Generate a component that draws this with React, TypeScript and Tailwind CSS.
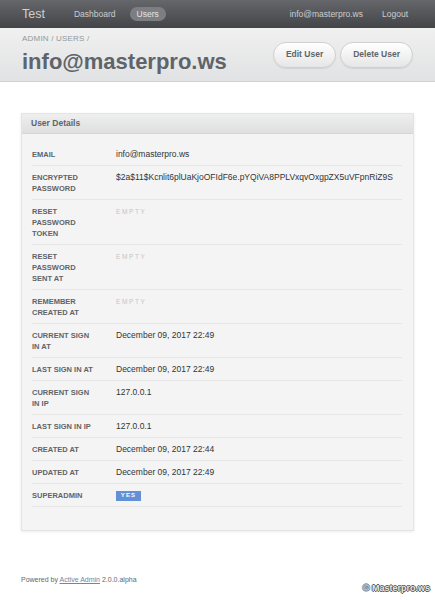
import React from 'react';

type Row = { label: string; value?: string; kind?: 'empty' | 'yes' };

const ROWS: Row[] = [
  { label: 'Email', value: 'info@masterpro.ws' },
  { label: 'Encrypted Password', value: '$2a$11$Kcnlit6plUaKjoOFIdF6e.pYQiVA8PPLVxqvOxgpZX5uVFpnRiZ9S' },
  { label: 'Reset Password Token', kind: 'empty' },
  { label: 'Reset Password Sent At', kind: 'empty' },
  { label: 'Remember Created At', kind: 'empty' },
  { label: 'Current Sign In At', value: 'December 09, 2017 22:49' },
  { label: 'Last Sign In At', value: 'December 09, 2017 22:49' },
  { label: 'Current Sign In Ip', value: '127.0.0.1' },
  { label: 'Last Sign In Ip', value: '127.0.0.1' },
  { label: 'Created At', value: 'December 09, 2017 22:44' },
  { label: 'Updated At', value: 'December 09, 2017 22:49' },
  { label: 'Superadmin', kind: 'yes' },
];

function ActionButton({ children }: { children: React.ReactNode }) {
  return (
    <button className="h-[26px] px-[12px] rounded-full border border-[#d0d0d0] bg-gradient-to-b from-[#ffffff] to-[#e6e6e6] text-[8.5px] font-bold text-[#5e6469] shadow-[0_1px_1px_rgba(0,0,0,0.08)]">
      {children}
    </button>
  );
}

export default function App() {
  return (
    <div className="relative min-h-[600px] bg-white font-['Liberation_Sans',Arial,sans-serif]">
      {/* Top nav */}
      <header className="h-[28px] flex items-center pl-[22px] pr-[27px] bg-gradient-to-b from-[#65676b] to-[#434549]">
        <span className="text-[12.5px] text-[#cfcfcf] leading-none">Test</span>
        <nav className="ml-[29px] flex items-center">
          <span className="text-[8.5px] text-[#cdcdcd]">Dashboard</span>
          <span className="ml-[14px] h-[14px] px-[7px] flex items-center rounded-full bg-[#7c7e82] text-[8.5px] text-[#e4e4e4]">Users</span>
        </nav>
        <div className="ml-auto flex items-center gap-[19px] text-[8.5px] text-[#cdcdcd]">
          <span>info@masterpro.ws</span>
          <span>Logout</span>
        </div>
      </header>

      {/* Title bar */}
      <div className="h-[54px] flex items-center justify-between pl-[22px] pr-[22px] bg-gradient-to-b from-[#f0f0f0] to-[#e1e2e3] border-b border-[#d2d2d2]">
        <div className="self-start pt-[6px] flex flex-col">
          <div className="text-[8px] leading-[10px] text-[#8f989f] tracking-[0.2px]">ADMIN / USERS /</div>
          <h1 className="mt-[6px] text-[22px] leading-[24px] font-bold text-[#5e6469]">info@masterpro.ws</h1>
        </div>
        <div className="flex items-center gap-[4px]">
          <ActionButton>Edit User</ActionButton>
          <ActionButton>Delete User</ActionButton>
        </div>
      </div>

      {/* Panel */}
      <div className="mx-[21px] mt-[31px] border border-[#e4e4e4] bg-[#f4f4f4] shadow-[0_1px_3px_rgba(0,0,0,0.08)]">
        <div className="h-[20px] flex items-center px-[9px] bg-gradient-to-b from-[#efefef] to-[#dedfe0] border-b border-[#d6d6d6] text-[8.5px] font-bold text-[#5e6469]">
          User Details
        </div>
        <div className="pt-[9px] pl-[10px] pr-[11px] pb-[23px]">
          {ROWS.map((r) => (
            <div key={r.label} className="flex border-b border-[#e6e6e6] pt-[6px] pb-[5px]">
              <div className="w-[84px] shrink-0 pr-[21px] text-[7.5px] leading-[11px] font-bold uppercase text-[#5e6469]">
                {r.label}
              </div>
              <div className="flex-1 text-[8.5px] leading-[11px] text-[#323537] whitespace-nowrap">
                {r.kind === 'empty' && (
                  <span className="text-[6.5px] tracking-[1.6px] text-[#c4c4c4]">EMPTY</span>
                )}
                {r.kind === 'yes' && (
                  <span className="inline-flex items-center justify-center w-[25px] h-[10px] bg-[#6490d8] text-[6px] font-bold tracking-[1.2px] text-white align-middle">
                    YES
                  </span>
                )}
                {!r.kind && r.value}
              </div>
            </div>
          ))}
        </div>
      </div>

      {/* Footer */}
      <div className="mx-[21px] mt-[44px] text-[7px] leading-[9px] text-[#666]">
        Powered by <span className="underline text-[#6f87a3]">Active Admin</span> 2.0.0.alpha
      </div>

      {/* Watermark overlay */}
      <div className="absolute right-[5px] bottom-[5px] text-[9px] font-bold text-[#e8e8e8] [text-shadow:1px_0_0_#555,-1px_0_0_#555,0_1px_0_#555,0_-1px_0_#555]">
        © Masterpro.ws
      </div>
    </div>
  );
}
